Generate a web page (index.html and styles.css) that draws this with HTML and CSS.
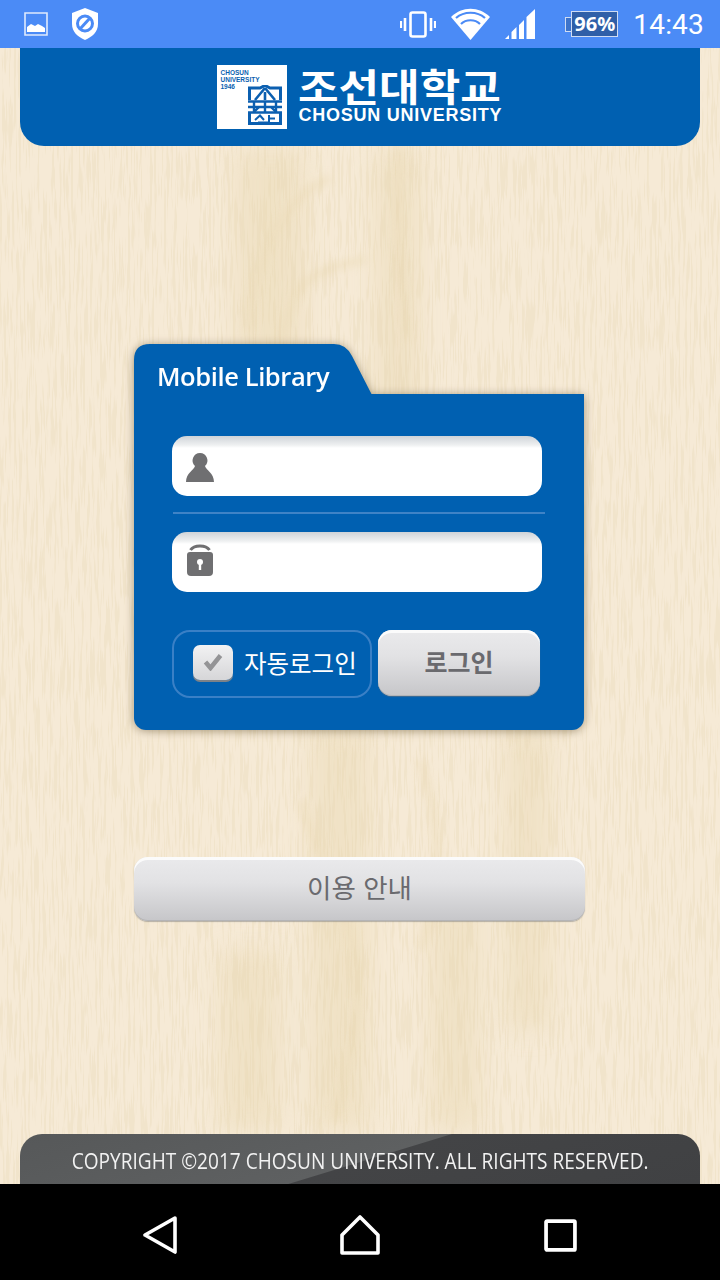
FILE: index.html
```html
<!DOCTYPE html>
<html lang="ko">
  <head>
    <meta charset="UTF-8" />
    <title>Chosun University Mobile Library</title>
    <link rel="stylesheet" href="styles.css">
  </head>
  <body>
    <div class="screen">
      <svg class="wood" viewBox="0 0 720 1280" preserveAspectRatio="none" aria-hidden="true">
        <filter id="grain" x="0" y="0" width="100%" height="100%" color-interpolation-filters="sRGB">
          <feTurbulence type="fractalNoise" baseFrequency="0.42 0.02" numOctaves="3" seed="11" />
          <feColorMatrix type="matrix" values="0 0 0 0 0.89  0 0 0 0 0.82  0 0 0 0 0.66  0 0 0 9 -4.5" />
        </filter>
        <filter id="soft" x="-20%" y="-20%" width="140%" height="140%">
          <feGaussianBlur stdDeviation="4" />
        </filter>
        <filter id="softer" x="-50%" y="-20%" width="200%" height="140%">
          <feGaussianBlur stdDeviation="12" />
        </filter>
        <rect width="720" height="1280" fill="#f6ead6" />
        <g fill="#eedfbf" filter="url(#softer)" opacity="0.7">
          <rect x="235" y="150" width="70" height="330" />
          <rect x="375" y="150" width="45" height="330" />
          <rect x="310" y="730" width="60" height="400" />
          <rect x="505" y="730" width="45" height="300" />
          <rect x="430" y="900" width="50" height="230" />
          <rect x="220" y="950" width="60" height="180" />
        </g>
        <g fill="none" stroke="#ecdcb9" stroke-width="8" filter="url(#soft)" opacity="0.6">
          <path d="M248 330C255 260 280 200 330 178" />
          <path d="M367 259C340 265 315 270 300 289C290 305 285 320 282 340" />
          <path d="M400 146C395 210 400 270 408 340" />
          <path d="M300 800C320 860 340 900 355 950C365 1000 350 1060 335 1120" />
          <path d="M420 760C440 820 445 880 420 950" />
        </g>
        <rect width="720" height="1280" filter="url(#grain)" opacity="0.22" />
      </svg>

      <div class="status-bar">
        <div class="status-left">
          <svg class="ic-image" viewBox="0 0 24 24">
            <path d="M1 1h22v22H1z" fill="none" stroke="#dfeafd" stroke-width="1.6" />
            <path d="M3 20v-5l4-3 4 2 3-2 4 2 3 2v4z" fill="#fff" />
          </svg>
          <svg class="ic-shield" viewBox="0 0 26 32">
            <path d="M13 0L26 5v11c0 8-6 13-13 16C6 29 0 24 0 16V5z" fill="#fff" />
            <circle cx="13" cy="15.500" r="7.500" fill="none" stroke="#4b8bf6" stroke-width="3" />
            <path d="M8 21L18 10" stroke="#4b8bf6" stroke-width="3" />
          </svg>
        </div>
        <div class="status-right">
          <svg class="ic-vibrate" viewBox="0 0 36 27">
            <rect x="10.500" y="1.500" width="15" height="24" rx="2" fill="none" stroke="#fff" stroke-width="2.600" />
            <path d="M5 7v13M0.800 10v7M31 7v13M35.200 10v7" stroke="#fff" stroke-width="2.600" />
          </svg>
          <svg class="ic-wifi" viewBox="0 0 39 32">
            <path d="M19.500 32L0 9C11 -2 28 -2 39 9z" fill="#fff" />
            <path d="M5 10C13 3 26 3 34 10M10 16C15 11 24 11 29 16" fill="none" stroke="#4b8bf6" stroke-width="2.200" />
          </svg>
          <svg class="ic-signal" viewBox="0 0 30 30">
            <path d="M0 30l4-4v4zM6.500 30V23l5-5v12zM14 30V16l5-5v19zM21.500 30V8L30 0v30z" fill="#fff" />
          </svg>
          <div class="battery">
            <span class="battery-nub"></span>
            <span class="battery-body">96%</span>
          </div>
          <span class="clock">14:43</span>
        </div>
      </div>

      <header class="top-banner">
        <div class="logo-mark">
          <span class="logo-mark-text">CHOSUN<br>UNIVERSITY<br>1946</span>
          <svg class="logo-seal" viewBox="0 0 34 40">
            <g fill="none" stroke="#0b5fb0">
              <path d="M1.500 15V3H12L17 0.500 22 3H32.500V15" stroke-width="3" />
              <path d="M17 3L7 15M17 3L27 15M17 7V15" stroke-width="2.600" />
              <path d="M0 16.500H34M0 22H34M0 27.500H34" stroke-width="2.400" />
              <path d="M6 17V27M28 17V27M17 17V27M11 22L6 27M23 22L28 27" stroke-width="2.400" />
              <path d="M1.500 28V38.500H32.500V28" stroke-width="3" />
              <path d="M7 35L12 30.500 16 35M21 30V37M21 33.500H27M10 37.500H21" stroke-width="2" />
            </g>
          </svg>
        </div>
        <div class="logo-words">
          <span class="logo-ko">조선대학교</span>
          <span class="logo-en">CHOSUN UNIVERSITY</span>
        </div>
      </header>

      <main class="login-area">
        <section class="panel">
          <div class="panel-tab">
            <svg class="panel-tab-shape" viewBox="0 0 238 51">
              <path d="M0 51V16Q0 0 16 0H200Q212 0 218 12L238 51z" fill="#0060b1" />
            </svg>
            <span class="panel-title">Mobile Library</span>
          </div>
          <div class="panel-body">
            <div class="field">
              <svg class="field-icon" viewBox="0 0 28 29">
                <path d="M14 0a7.500 7.500 0 0 1 5 13c1 4 9 7 9 16H0c0-9 8-12 9-16a7.500 7.500 0 0 1 5-13z" fill="#6f6f71" />
              </svg>
            </div>
            <div class="divider"></div>
            <div class="field">
              <svg class="field-icon field-icon-lock" viewBox="0 0 28 32">
                <path d="M4.500 6C8 0.500 20 0.500 23.500 6" fill="none" stroke="#6f6f71" stroke-width="3" />
                <path d="M4 8h20a3 3 0 0 1 3 3v17a4 4 0 0 1-4 4H5a4 4 0 0 1-4-4V11a3 3 0 0 1 3-3z" fill="#6f6f71" />
                <circle cx="14" cy="18" r="3" fill="#fff" />
                <path d="M12.800 18h2.400v8h-2.400z" fill="#fff" />
              </svg>
            </div>
            <div class="actions">
              <label class="auto-login">
                <span class="check">
                  <svg class="check-mark" viewBox="0 0 20 18">
                    <path d="M2.500 9l5 6L17.500 2.500" fill="none" stroke="#949496" stroke-width="4.500" />
                  </svg>
                </span>
                <span class="auto-login-text">자동로그인</span>
              </label>
              <button class="btn btn-login" type="button">로그인</button>
            </div>
          </div>
        </section>

        <button class="btn btn-guide" type="button">이용 안내</button>
      </main>

      <footer class="copyright">
        <span class="copyright-text">COPYRIGHT ©2017 CHOSUN UNIVERSITY. ALL RIGHTS RESERVED.</span>
      </footer>

      <nav class="nav-bar">
        <svg class="nav-back" viewBox="0 0 34 38">
          <path d="M32 2L2 19l30 17z" fill="none" stroke="#fff" stroke-width="3.600" stroke-linejoin="round" />
        </svg>
        <svg class="nav-home" viewBox="0 0 40 40">
          <path d="M20 2L38 20v18H2V20z" fill="none" stroke="#fff" stroke-width="3.600" stroke-linejoin="round" />
        </svg>
        <svg class="nav-recent" viewBox="0 0 32 32">
          <rect x="2" y="2" width="28" height="28" rx="1" fill="none" stroke="#fff" stroke-width="3.600" />
        </svg>
      </nav>
    </div>
  </body>
</html>
```

FILE: styles.css
```css
* {
  box-sizing: border-box;
}

body {
  margin: 0;
  font-family: "Noto Sans CJK KR", "Noto Sans", sans-serif;
}

.screen {
  position: relative;
  width: 720px;
  height: 1280px;
  overflow: hidden;
  display: flex;
  flex-direction: column;
  background: #f6ead6;
}

.wood {
  position: absolute;
  left: 0;
  top: 0;
  width: 720px;
  height: 1280px;
}

/* status bar */
.status-bar {
  position: relative;
  height: 48px;
  flex: none;
  display: flex;
  justify-content: space-between;
  align-items: center;
  background: #4b8bf6;
  color: #fff;
}

.status-left {
  display: flex;
  align-items: center;
  gap: 24px;
  padding-left: 24px;
}

.ic-image {
  width: 24px;
  height: 24px;
}

.ic-shield {
  width: 26px;
  height: 32px;
}

.status-right {
  display: flex;
  align-items: center;
  padding-right: 16px;
}

.ic-vibrate {
  width: 36px;
  height: 27px;
  margin-right: 15px;
}

.ic-wifi {
  width: 39px;
  height: 32px;
  margin-right: 15px;
}

.ic-signal {
  width: 30px;
  height: 30px;
  margin-right: 30px;
}

.battery {
  display: flex;
  align-items: center;
  margin-right: 15px;
}

.battery-nub {
  width: 6px;
  height: 15px;
  background: #3d74cb;
  border: 1px solid #cfdcf3;
  border-right: 0;
}

.battery-body {
  width: 47px;
  height: 26px;
  background: #2f5fa8;
  border: 1px solid #cfdcf3;
  font-family: "Noto Sans", sans-serif;
  font-size: 20px;
  font-weight: 700;
  line-height: 23px;
  text-align: center;
}

.clock {
  font-family: Roboto, sans-serif;
  font-size: 28px;
  letter-spacing: 0.2px;
}

/* banner */
.top-banner {
  position: relative;
  flex: none;
  height: 98px;
  margin: 0 20px;
  display: flex;
  justify-content: center;
  align-items: center;
  gap: 12px;
  padding-right: 1px;
  background: #0060b1;
  border-radius: 0 0 24px 24px;
}

.logo-mark {
  width: 70px;
  height: 64px;
  position: relative;
  background: #fff;
  padding: 4px;
}

.logo-mark-text {
  display: block;
  font-family: "Liberation Sans", sans-serif;
  font-size: 6.5px;
  font-weight: 700;
  line-height: 7px;
  color: #0b5fb0;
}

.logo-seal {
  position: absolute;
  right: 5px;
  bottom: 4px;
  width: 34px;
  height: 40px;
}

.logo-words {
  width: 204px;
  margin-bottom: 3px;
  display: flex;
  flex-direction: column;
  color: #fff;
}

.logo-ko {
  font-size: 38px;
  font-weight: 700;
  line-height: 39px;
  white-space: nowrap;
  transform: translate(-1px, -3px) scaleX(1.16);
  transform-origin: left center;
}

.logo-en {
  font-family: "Liberation Sans", sans-serif;
  font-size: 18px;
  font-weight: 700;
  line-height: 16px;
  letter-spacing: 0.75px;
  white-space: nowrap;
}

/* login */
.login-area {
  position: relative;
  flex: 1;
  display: flex;
  flex-direction: column;
  align-items: flex-start;
  padding: 198px 0 0 134px;
}

.panel {
  width: 450px;
  filter: drop-shadow(0 1px 5px rgba(100, 80, 45, 0.55));
}

.panel-tab {
  position: relative;
  width: 238px;
  height: 50px;
  display: flex;
  align-items: center;
  padding-left: 23px;
  padding-top: 14px;
}

.panel-tab-shape {
  position: absolute;
  left: 0;
  top: 0;
  width: 238px;
  height: 51px;
}

.panel-title {
  position: relative;
  font-family: "Open Sans", sans-serif;
  font-size: 25.5px;
  font-weight: 600;
  letter-spacing: -0.4px;
  color: #fff;
}

.panel-body {
  height: 336px;
  padding: 42px 38px 0;
  background: #0060b1;
  border-radius: 0 0 12px 12px;
}

.field {
  width: 370px;
  height: 60px;
  display: flex;
  align-items: center;
  padding: 4px 0 0 14px;
  background: linear-gradient(#cfd3d8 0, #eef0f1 9px, #fff 12px);
  border-radius: 15px;
}

.field-icon {
  width: 28px;
  height: 29px;
  margin-top: -1px;
}

.field-icon-lock {
  height: 32px;
  margin-top: -8px;
}

.divider {
  width: 372px;
  height: 2px;
  margin: 16px 0 18px 1px;
  background: #3f83c6;
}

.actions {
  display: flex;
  gap: 6px;
  margin-top: 38px;
}

.auto-login {
  width: 200px;
  height: 68px;
  display: flex;
  align-items: center;
  gap: 11px;
  padding: 0 0 0 19px;
  border: 2px solid #3a80c6;
  border-radius: 18px;
}

.check {
  width: 40px;
  height: 35px;
  margin-top: -4px;
  display: flex;
  align-items: center;
  justify-content: center;
  background: linear-gradient(#f2f2f3, #d6d6d8);
  border-radius: 7px;
  box-shadow: 0 2px 0 #7d8288;
}

.check-mark {
  width: 20px;
  height: 18px;
}

.auto-login-text {
  font-size: 24.5px;
  line-height: 30px;
  margin-top: -2px;
  color: #fff;
  white-space: nowrap;
}

.btn {
  display: block;
  padding: 0;
  border: 0;
  font-family: "Noto Sans CJK KR", sans-serif;
  color: #6a6a6e;
  background: linear-gradient(#eaeaec 0, #e2e2e4 40%, #c6c6c9 100%);
  box-shadow: inset 0 3px 0 #fbfbfb, inset 0 -1px 0 #b4b4b6, 0 1px 1px rgba(120, 120, 120, 0.5);
}

.btn-login {
  width: 162px;
  height: 66px;
  padding-bottom: 4px;
  border-radius: 14px;
  font-size: 25px;
  font-weight: 700;
}

.btn-guide {
  width: 451px;
  height: 64px;
  margin-top: 127px;
  padding-bottom: 5px;
  border-radius: 14px;
  font-size: 26.5px;
  font-weight: 400;
}

/* bottom */
.copyright {
  position: relative;
  flex: none;
  height: 50px;
  margin: 0 20px;
  display: flex;
  justify-content: center;
  padding-top: 12px;
  border-radius: 22px 22px 0 0;
  background: linear-gradient(163deg, #565859 0, #5e6061 51%, #434446 51.4%, #404143 100%);
}

.copyright-text {
  font-family: "Open Sans", sans-serif;
  font-size: 22.5px;
  line-height: 30px;
  color: #f2f2f2;
  white-space: nowrap;
  transform: scaleX(0.848);
}

.nav-bar {
  position: relative;
  flex: none;
  height: 96px;
  background: #000;
}

.nav-back,
.nav-home,
.nav-recent {
  position: absolute;
}

.nav-back {
  left: 143px;
  top: 32px;
  width: 34px;
  height: 38px;
}

.nav-home {
  left: 340px;
  top: 31px;
  width: 40px;
  height: 40px;
}

.nav-recent {
  left: 544px;
  top: 35px;
  width: 33px;
  height: 33px;
}
```
